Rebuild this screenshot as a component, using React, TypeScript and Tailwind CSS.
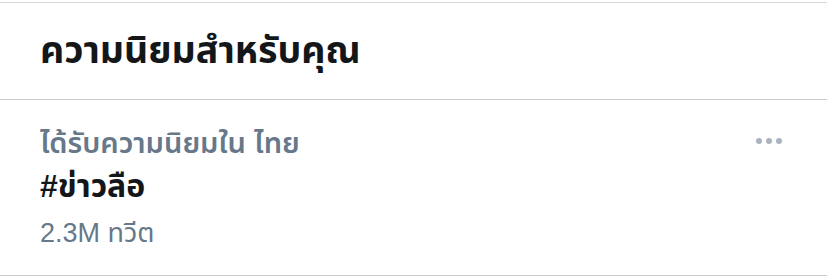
import React from "react";

const App: React.FC = () => {
  return (
    <div
      className="w-[827px] h-[279px] bg-white overflow-hidden"
      style={{ fontFamily: '"Liberation Sans", "Noto Sans Thai", "Noto Sans", sans-serif' }}
    >
      <div className="h-[3px] border-b border-[#d6d9dc]" />
      <div className="h-[97px] pl-[40px] flex items-center border-b border-[#c9cdd1]">
        <h2 className="text-[37.5px] font-bold text-[#14171a] leading-none">ความนิยมสำหรับคุณ</h2>
      </div>
      <div className="h-[176px] pl-[40px] pr-[45px] pt-[22px] flex justify-between border-b border-[#c9cdd1]">
        <div className="flex flex-col">
          <span className="text-[29px] font-semibold text-[#66788a] leading-[42px]">ได้รับความนิยมใน ไทย</span>
          <span className="text-[32px] font-bold text-[#14171a] leading-[44px]">#ข่าวลือ</span>
          <span className="text-[27px] text-[#66788a] leading-[50px]">2.3M ทวีต</span>
        </div>
        <div className="flex gap-[4px] pt-[16px]">
          <span className="w-[6px] h-[6px] rounded-full bg-[#aab4be]" />
          <span className="w-[6px] h-[6px] rounded-full bg-[#aab4be]" />
          <span className="w-[6px] h-[6px] rounded-full bg-[#aab4be]" />
        </div>
      </div>
    </div>
  );
};

export default App;
